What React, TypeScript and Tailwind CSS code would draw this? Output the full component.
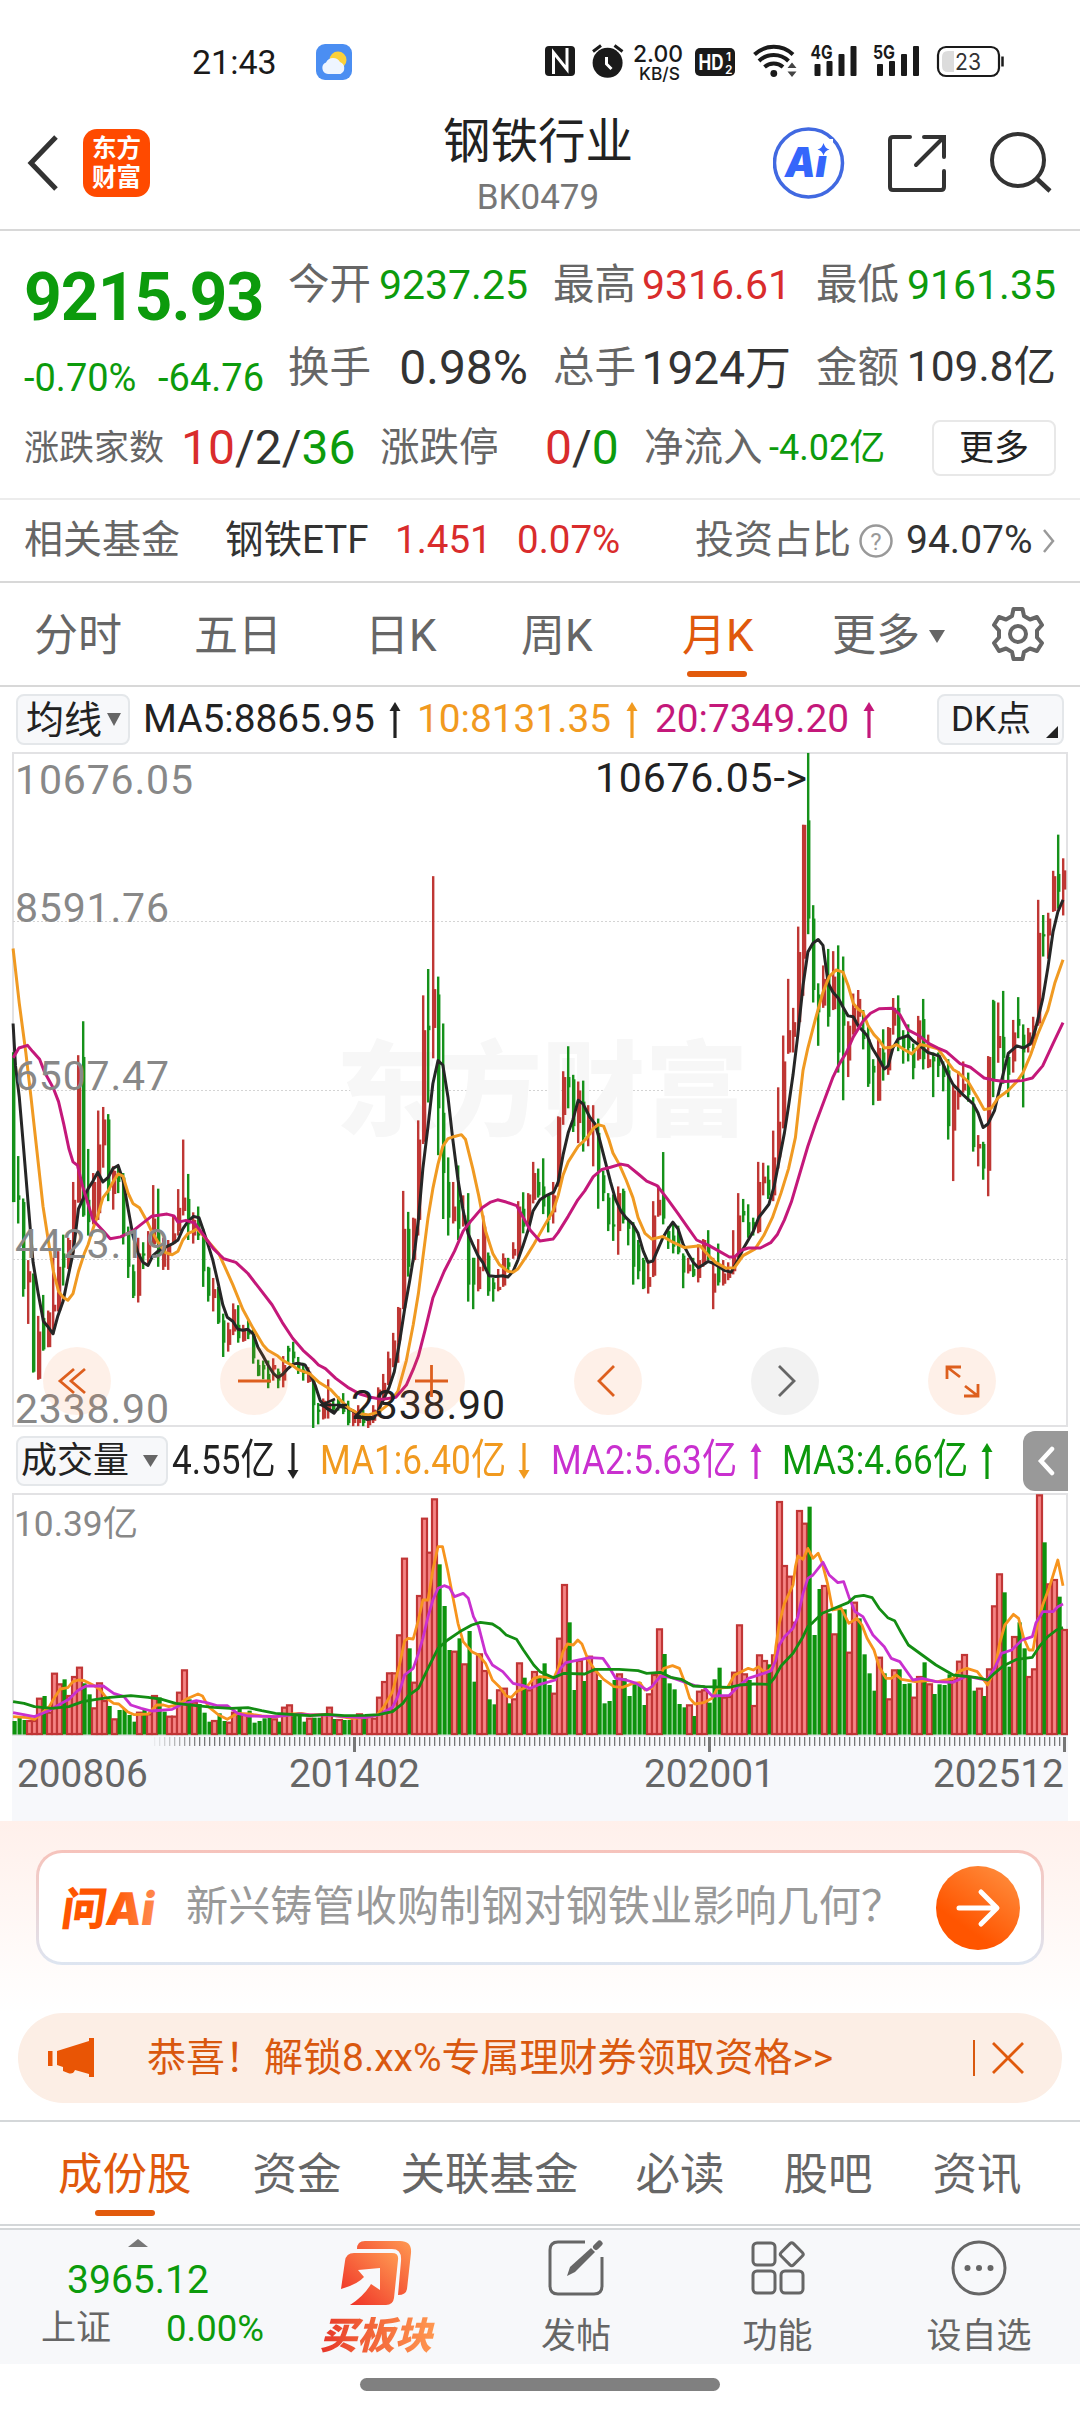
import { Fragment } from 'react'

// One entry per month: direction + high/bodyTop/bodyBottom/low, measured from the top of the plot
const CANDLES = `
g700/700/1035/1035 g932/1020/1030/1083 g1027/1035/1230/1247 r1165/1190/1215/1308 g1195/1203/1415/1417 r1290/1325/1431/1433
g1243/1295/1365/1368 r1278/1282/1360/1360 r1160/1265/1280/1330 r1145/1180/1278/1280 g1108/1150/1182/1222 r1115/1120/1180/1185
r990/1030/1110/1150 r706/730/1036/1036 g630/710/1065/1068 g916/1030/1080/1110 r970/990/1080/1085 r830/906/1060/1075
r822/850/908/958 g838/850/1010/1033 r955/965/1017/1052 g955/965/990/1015 g970/980/1110/1130 g1090/1105/1180/1205
g1175/1190/1245/1250 r1115/1150/1245/1260 g1125/1150/1155/1185 r1100/1130/1160/1175 r997/1072/1130/1135 g1005/1100/1155/1180
r1115/1140/1180/1187 r1120/1130/1155/1187 r1065/1105/1128/1130 r1006/1048/1100/1110 r895/1025/1055/1065 g972/1028/1085/1120
r1058/1075/1110/1128 g1045/1075/1110/1120 g1095/1110/1190/1225 g1180/1182/1245/1258 r1205/1230/1250/1280 g1225/1240/1305/1308
g1285/1300/1350/1382 r1305/1320/1355/1370 r1262/1275/1325/1333 g1266/1310/1340/1350 r1310/1318/1346/1348 g1300/1325/1332/1342
g1320/1330/1385/1397 g1388/1400/1424/1425 g1390/1400/1410/1432 g1390/1420/1440/1452 r1385/1400/1410/1435 g1408/1415/1435/1452
r1380/1400/1435/1450 g1357/1362/1370/1395 g1348/1370/1385/1395 g1382/1400/1410/1420 g1395/1410/1420/1435 r1405/1415/1438/1440
g1430/1435/1490/1541 g1485/1500/1505/1533 r1475/1480/1520/1522 r1432/1485/1500/1520 g1480/1490/1500/1505 g1470/1480/1495/1502
g1463/1490/1505/1510 g1480/1500/1530/1535 r1500/1505/1530/1537 r1490/1500/1530/1537 g1500/1510/1530/1537 r1510/1515/1535/1541
r1490/1500/1525/1530 r1450/1455/1510/1515 r1420/1440/1478/1480 r1370/1385/1440/1445 r1328/1345/1400/1405 r1270/1272/1345/1395
r1010/1095/1272/1275 g1057/1095/1180/1202 r1070/1072/1165/1170 r852/895/1075/1110 r572/650/900/905 g513/640/650/812
r305/558/645/713 g530/570/825/930 g635/835/970/1073 g935/990/1070/1110 r990/1045/1078/1083 g953/1030/1095/1120
r1020/1065/1085/1090 g1015/1075/1220/1258 g1160/1160/1220/1275 r1118/1180/1230/1235 r1065/1090/1185/1190 g1148/1155/1235/1245
g1205/1215/1230/1258 r1185/1225/1232/1235 r1150/1160/1222/1225 g1160/1170/1180/1188 r1125/1140/1155/1162 r1033/1045/1150/1160
g1013/1050/1090/1105 r1015/1018/1080/1085 r945/970/1030/1038 g960/990/1020/1025 g937/1000/1045/1062 g1018/1020/1075/1103
r990/1020/1058/1083 r843/845/1000/1000 r742/755/840/862 g686/755/778/825 g750/760/865/878 r765/785/858/903
g763/810/890/922 r818/850/885/910 r818/862/870/955 g848/880/965/1050 g965/975/1015/1033 g1015/1025/1085/1100
g1018/1085/1090/1122 r1000/1015/1100/1153 g1005/1010/1075/1083 g1075/1080/1095/1132 g1080/1090/1180/1220 g1120/1130/1190/1208
g1160/1165/1228/1230 r1165/1203/1225/1240 r1033/1065/1200/1203 r998/1030/1065/1068 g923/1020/1072/1085 g1090/1100/1125/1140
g1080/1110/1135/1150 g1088/1110/1148/1152 g1150/1155/1193/1228 r1160/1175/1190/1195 g1160/1185/1200/1203 r1130/1165/1205/1215
r1118/1120/1175/1180 g1098/1130/1160/1165 r1160/1195/1238/1275 g1128/1180/1215/1222 r1165/1195/1218/1222 r1170/1190/1205/1210
r1098/1155/1190/1197 r1015/1065/1155/1160 g1028/1055/1065/1080 g1040/1080/1108/1115 g1070/1080/1095/1110 r945/990/1102/1105
r947/978/993/1020 g953/985/1020/1028 r875/935/1020/1033 r778/855/935/960 r662/720/868/870 r535/650/700/703
r600/632/665/700 r418/475/632/650 r190/190/490/573 g29/180/400/435 g370/400/560/588 g545/570/610/685
r505/535/595/600 g468/530/620/642 r473/530/603/605 g460/520/700/745 g485/610/640/807 r630/640/718/755
r568/600/655/660 r560/580/620/640 g605/650/670/693 g640/670/770/777 g715/730/745/818 r670/690/808/808
g648/700/730/763 r643/645/740/750 r578/600/640/660 g572/600/670/697 g650/665/690/725 g637/665/690/720
g680/690/735/760 r618/628/715/718 g580/625/715/738 r660/715/733/735 g700/710/720/800 g700/715/730/755
g720/730/755/787 g715/740/865/895 r775/785/875/988 r742/790/800/828 r720/770/785/790 g745/770/795/810
g800/815/912/922 r885/905/915/955 g900/905/960/985 r708/710/965/1022 g582/585/760/800 r588/663/690/723
g562/665/712/770 g705/710/750/800 r627/655/720/745 g576/625/640/668 g637/660/700/823 r645/655/685/700
r620/640/670/690 r358/432/635/640 g392/435/440/485 r387/400/438/490 r293/305/383/385 g212/300/340/378
r265/292/335/393`
  .trim()
  .split(/\s+/)
  .map((s) => {
    const [high, top, bottom, low] = s.slice(1).split('/').map(Number)
    return { up: s[0] === 'r', high, top, bottom, low }
  })

const VOLUMES = `
g903 g893 g900 r900 r900 r833 g828 r875 r758 r790 g778 r825 r768 r740 g790 g823 r862 r787 r840 g858 r895 g870 g868 g885 g905
r875 g868 r880 r825 g832 g875 r887 r887 r815 r748 g838 r845 g852 g878 g905 r900 g880 g903 r905 r875 g865 r880 g872 g908 g903
g895 g893 r895 g905 r860 r853 g885 g878 g905 r893 g893 g893 r880 r860 g897 r897 g900 g900 r890 r880 g890 r888 r893 r830 r783
r757 r757 r643 r413 g685 r785 r525 r293 r395 r235 g433 g558 g690 r692 g655 r730 g633 g785 r700 r750 g838 g853 r808 r803 g850
r835 r727 g773 r808 r753 g770 g730 g795 r818 r653 r492 g607 g810 r720 g783 r707 r750 g780 g850 g843 g780 r760 g775 g828 g790
g787 g855 r820 r762 r625 g702 g790 g808 g852 g862 r853 g888 r812 r808 g848 g778 g743 r830 r828 r755 r613 r760 g780 r855 r703
r720 g733 r703 r243 r435 r467 r605 r270 r308 g260 g645 g507 r495 g580 r640 g560 g568 r695 r545 g595 g703 g760 g812 r710 g760
r835 r748 g748 g792 g790 r830 r768 g727 r790 g822 g793 g795 g763 r775 r722 r702 g770 g812 r803 g828 r745 r556 r460 g517 g740
r648 g607 g685 r768 r745 r223 g367 r490 r477 g530 r627`
  .trim()
  .split(/\s+/)
  .map((s) => ({ up: s[0] === 'r', top: Number(s.slice(1)) }))

const MA5 =
  '38,635 45,730 56,800 67,900 82,1040 96,1170 111,1240 126,1302 140,1315 154,1330 168,1290 183,1258 197,1205 212,1150 228,1050 243,1025 256,1005 270,988 284,968 299,990 314,980 328,960 343,953 357,985 372,1050 386,1110 401,1150 415,1170 430,1177 444,1155 459,1145 473,1140 488,1133 502,1128 517,1120 531,1095 546,1078 562,1067 578,1070 589,1095 604,1130 618,1165 633,1215 647,1265 660,1293 676,1302 691,1320 705,1322 720,1320 735,1330 749,1360 764,1380 778,1400 793,1418 807,1428 822,1420 836,1408 851,1398 865,1396 886,1400 900,1420 915,1445 930,1480 950,1498 970,1508 985,1493 1005,1495 1030,1505 1045,1515 1065,1522 1085,1520 1100,1500 1115,1475 1130,1450 1145,1415 1160,1350 1175,1275 1190,1210 1205,1140 1215,1075 1228,960 1243,865 1257,770 1272,718 1286,728 1301,800 1315,895 1330,985 1344,1050 1359,1105 1373,1130 1388,1155 1402,1170 1420,1200 1440,1202 1460,1200 1475,1203 1490,1190 1504,1165 1520,1130 1535,1095 1548,1055 1568,1030 1588,1020 1608,1013 1621,990 1635,930 1650,880 1664,850 1679,807 1693,815 1713,845 1728,860 1743,900 1758,945 1773,990 1788,1030 1803,1055 1818,1070 1838,1085 1853,1105 1868,1145 1882,1170 1896,1167 1911,1140 1925,1115 1940,1095 1954,1080 1969,1095 1984,1130 1998,1150 2013,1170 2028,1182 2043,1175 2056,1168 2071,1172 2088,1180 2103,1188 2123,1192 2143,1165 2158,1140 2173,1120 2188,1100 2203,1070 2218,1055 2233,1040 2248,1000 2263,940 2278,880 2290,820 2303,750 2317,660 2332,550 2346,475 2361,455 2376,447 2390,460 2405,545 2419,565 2434,578 2448,598 2463,618 2478,620 2492,640 2518,662 2533,690 2553,715 2568,737 2579,730 2593,690 2608,670 2637,662 2651,673 2668,683 2695,700 2728,708 2753,750 2768,772 2797,795 2826,815 2840,835 2855,868 2869,860 2888,830 2903,780 2928,702 2953,685 2973,690 2993,680 3008,645 3028,580 3043,510 3058,430 3072,385 3087,358'
const MA10 =
  '38,467 56,590 75,700 90,800 105,905 125,1045 140,1120 155,1190 170,1235 183,1248 197,1255 212,1240 228,1190 245,1150 256,1130 270,1095 284,1065 299,1025 314,1010 328,990 343,972 357,977 372,1015 386,1038 405,1048 425,1075 440,1100 459,1125 480,1148 500,1153 517,1145 531,1120 546,1105 562,1100 572,1095 590,1110 618,1135 635,1150 650,1175 676,1220 705,1275 735,1318 764,1355 778,1367 807,1380 822,1390 851,1402 865,1410 900,1420 925,1438 960,1455 990,1480 1015,1498 1040,1508 1070,1512 1100,1505 1125,1490 1155,1460 1180,1390 1200,1310 1215,1240 1228,1160 1243,1070 1257,1005 1272,950 1286,910 1301,893 1320,888 1340,884 1352,895 1373,960 1390,1020 1410,1100 1431,1150 1450,1175 1475,1190 1490,1192 1504,1185 1530,1155 1550,1130 1583,1085 1606,1055 1621,1020 1635,975 1650,945 1679,910 1703,893 1723,870 1737,862 1753,865 1768,895 1780,925 1798,950 1818,985 1838,1025 1853,1070 1873,1105 1893,1118 1925,1112 1954,1125 1988,1137 2033,1133 2058,1155 2078,1170 2108,1183 2133,1182 2158,1155 2193,1140 2218,1110 2243,1070 2268,1015 2290,960 2310,890 2323,800 2332,740 2346,690 2368,625 2390,565 2408,530 2428,515 2448,520 2463,550 2478,590 2492,603 2506,610 2521,640 2538,660 2553,672 2568,690 2588,688 2603,682 2623,692 2648,703 2673,682 2698,686 2724,692 2753,722 2768,738 2783,745 2811,765 2838,800 2858,828 2878,825 2898,802 2928,785 2953,765 2971,745 2993,705 3013,660 3043,605 3063,545 3087,492'
const MA20 =
  '38,712 55,690 80,684 95,698 115,715 130,745 155,780 170,810 185,860 200,915 212,945 225,953 240,1000 256,1040 270,1075 300,1100 320,1117 350,1113 385,1100 410,1085 440,1067 485,1062 505,1066 517,1080 540,1076 565,1082 590,1108 620,1140 650,1162 685,1170 720,1195 750,1225 790,1265 820,1305 850,1340 880,1367 910,1388 925,1400 945,1408 975,1430 1010,1450 1045,1465 1080,1473 1110,1477 1150,1472 1180,1445 1200,1410 1215,1380 1235,1320 1257,1250 1290,1190 1320,1145 1345,1100 1370,1075 1400,1048 1425,1035 1445,1030 1470,1035 1500,1043 1520,1070 1540,1098 1568,1122 1606,1118 1621,1103 1650,1067 1678,1030 1698,1010 1723,978 1748,962 1773,957 1803,950 1823,953 1858,975 1878,988 1908,998 1938,1028 1968,1060 1998,1093 2023,1120 2058,1132 2088,1145 2118,1158 2133,1158 2153,1143 2173,1138 2208,1138 2238,1126 2258,1107 2278,1075 2298,1035 2323,970 2346,910 2368,860 2390,815 2418,757 2438,725 2458,700 2478,665 2506,630 2528,612 2553,602 2593,601 2613,615 2638,650 2668,662 2698,680 2724,690 2748,698 2778,718 2788,725 2818,733 2838,745 2858,757 2888,762 2918,765 2968,763 2998,757 3028,730 3058,680 3087,633'

const VMA5 =
  '38,890 80,893 100,898 115,885 143,860 157,835 175,807 197,803 212,785 228,780 245,782 270,795 290,808 310,835 330,850 345,852 370,875 390,884 430,882 455,855 475,855 490,860 515,855 540,838 575,822 588,828 605,860 635,885 660,898 690,880 725,882 760,888 800,890 850,882 875,880 900,885 950,883 990,890 1020,895 1060,893 1095,885 1115,860 1140,815 1160,735 1175,663 1185,655 1200,657 1215,600 1228,540 1243,540 1257,450 1272,380 1285,380 1300,450 1315,530 1330,610 1345,665 1370,695 1390,705 1410,730 1430,780 1450,800 1470,828 1485,832 1500,815 1530,800 1550,775 1568,770 1588,772 1608,775 1621,745 1635,695 1648,672 1665,675 1678,660 1690,672 1708,720 1728,750 1753,778 1783,800 1808,802 1838,790 1858,788 1873,810 1893,805 1908,780 1928,745 1953,737 1973,745 1988,785 2003,835 2018,852 2043,848 2068,835 2083,805 2113,802 2133,765 2153,755 2173,745 2188,750 2203,740 2218,755 2233,752 2248,735 2253,680 2263,610 2278,550 2303,495 2310,440 2317,408 2332,418 2346,385 2361,415 2376,400 2388,430 2403,490 2418,570 2443,565 2465,610 2488,595 2503,615 2518,655 2538,690 2553,740 2573,775 2588,775 2603,765 2618,778 2658,785 2698,782 2723,785 2768,775 2783,755 2808,745 2838,755 2868,795 2888,750 2903,670 2918,615 2943,583 2958,595 2973,655 2988,690 3000,690 3013,610 3028,555 3048,500 3072,420 3087,497'
const VMA10 =
  '38,878 100,890 140,873 170,855 200,838 225,812 250,798 275,798 300,798 330,820 360,830 380,855 410,865 440,873 500,868 530,852 570,842 600,848 630,857 660,857 690,880 720,888 800,890 870,882 900,885 950,885 1000,890 1060,893 1100,885 1140,862 1155,830 1175,765 1200,745 1215,700 1228,655 1243,590 1257,540 1272,505 1290,497 1305,503 1320,530 1345,520 1360,535 1375,590 1390,620 1410,700 1430,735 1460,755 1490,790 1520,797 1540,805 1568,793 1613,780 1628,745 1643,728 1668,723 1713,713 1751,715 1768,740 1788,775 1818,780 1848,790 1878,810 1893,800 1918,768 1948,772 1978,783 2018,797 2043,800 2068,828 2118,826 2143,800 2173,775 2218,760 2240,752 2253,720 2263,675 2278,650 2303,625 2317,590 2332,520 2346,475 2361,465 2390,427 2408,465 2433,488 2450,485 2465,530 2483,575 2506,590 2535,645 2568,680 2588,715 2613,725 2651,780 2678,775 2718,785 2768,787 2808,768 2838,775 2868,780 2888,745 2908,700 2938,690 2968,660 2998,650 3008,610 3028,575 3058,575 3072,560 3087,552'
const VMA20 =
  '38,845 70,850 100,860 150,865 200,860 240,845 280,838 320,832 380,827 430,832 470,838 510,850 570,857 620,862 670,865 720,863 760,872 800,880 870,885 900,887 950,883 1000,887 1060,886 1100,884 1140,875 1170,850 1185,828 1215,805 1243,745 1272,685 1300,660 1340,632 1370,615 1395,607 1430,612 1450,625 1470,645 1500,658 1520,690 1550,735 1568,755 1608,773 1638,760 1698,762 1728,748 1798,748 1853,752 1878,760 1918,757 1948,772 1978,778 2013,798 2048,800 2118,802 2148,795 2188,792 2233,793 2248,775 2268,738 2303,700 2332,650 2346,620 2361,607 2388,580 2418,567 2463,548 2483,530 2508,526 2533,533 2553,565 2578,593 2598,602 2618,640 2638,675 2678,705 2718,735 2768,765 2838,773 2868,780 2888,760 2913,738 2953,718 2998,712 3018,680 3043,650 3068,630 3087,623'

const RED = '#bf3734'
const GREEN = '#15911a'

function StatusIcons() {
  return (
    <svg width="470" height="44" viewBox="0 0 470 44" fontFamily="Inter, Roboto, sans-serif" fill="#1a1a1a">
      {/* nfc */}
      <rect x="5" y="6" width="30" height="30" rx="4" />
      <path d="M13.5 34V12.500L27 29.500V8" fill="none" stroke="#fff" strokeWidth="3" />
      {/* alarm */}
      <circle cx="67.600" cy="22.800" r="15" />
      <path d="M53 11.500L61 5.500M82.500 11.500L74.500 5.500" stroke="#1a1a1a" strokeWidth="3" />
      <path d="M66.500 17V24L71.500 29" fill="none" stroke="#fff" strokeWidth="3" />
      <text x="93" y="22" fontSize="23.500" fontWeight="500" textLength="50" lengthAdjust="spacingAndGlyphs">2.00</text>
      <text x="99" y="39.500" fontSize="17.500" fontWeight="500" textLength="41" lengthAdjust="spacingAndGlyphs">KB/S</text>
      {/* hd */}
      <rect x="155" y="8" width="40" height="28" rx="5" />
      <text x="158.500" y="30" fontSize="21" fontWeight="700" fill="#fff" textLength="25" lengthAdjust="spacingAndGlyphs">HD</text>
      <text x="186" y="21" fontSize="12" fontWeight="600" fill="#fff">1</text>
      <text x="185" y="33.500" fontSize="12" fontWeight="600" fill="#fff">2</text>
      {/* wifi */}
      <g fill="none" stroke="#1a1a1a" strokeWidth="4">
        <path d="M214.500 14.500A28 28 0 0 1 253 14.500" />
        <path d="M219 21A21 21 0 0 1 248.500 21" />
        <path d="M224.500 27A14 14 0 0 1 243 27" />
      </g>
      <circle cx="233.800" cy="33.500" r="3.400" />
      <path d="M247.500 28L252 22.500L256.500 28ZM247.500 31.500L252 37L256.500 31.500Z" fill="#444" />
      {[
        [0, '4G'],
        [62.5, '5G'],
      ].map(([x, name]) => (
        <g key={name} transform={`translate(${x} 0)`}>
          <text x="270.500" y="18.500" fontSize="19" fontWeight="700" textLength="22" lengthAdjust="spacingAndGlyphs">{name}</text>
          <rect x="274.500" y="24" width="6" height="12" rx="1" />
          <rect x="286.500" y="21" width="6" height="15" rx="1" />
          <rect x="298.500" y="14" width="6" height="22" rx="1" />
          <rect x="310.500" y="6" width="6" height="30" rx="1" />
        </g>
      ))}
      {/* battery */}
      <rect x="398" y="7" width="61" height="29" rx="8" fill="none" stroke="#1a1a1a" strokeWidth="2.200" />
      <path d="M408 11H414V32H408Q402 32 402 26V17Q402 11 408 11Z" fill="#dcdcdc" />
      <path d="M462.500 16.500V26.500" stroke="#1a1a1a" strokeWidth="2.500" />
      <text x="415" y="30" fontSize="23" fill="#333" textLength="26" lengthAdjust="spacingAndGlyphs">23</text>
    </svg>
  )
}

function Header() {
  return (
    <>
      <div className="flex h-[96px] items-center pt-7">
        <span className="ml-[192px] w-[124px] text-[34px] leading-none text-[#1a1a1a]">21:43</span>
        <svg width="36" height="36" viewBox="0 0 36 36">
          <rect width="36" height="36" rx="9" fill="#4b8ef2" />
          <circle cx="22" cy="16" r="8.500" fill="#fcd13a" />
          <path d="M12 30a6 6 0 0 1-2-11.500a8 8 0 0 1 14 -0.500a6.500 6.500 0 0 1 0.500 12Z" fill="#eef5ff" />
        </svg>
        <div className="ml-[188px]">
          <StatusIcons />
        </div>
      </div>
      <header className="flex h-[135px] items-center border-b-2 border-[#d8d8d8]">
        <svg className="ml-[26px]" width="34" height="60" viewBox="0 0 34 60" fill="none" stroke="#333" strokeWidth="5">
          <path d="M30 4L5 30L30 56" />
        </svg>
        <div className="ml-[23px] flex h-[68px] w-[67px] flex-col items-center justify-center rounded-[14px] bg-[#ff4a00] text-[24.500px] font-bold leading-[29px] text-white">
          <span>东方</span>
          <span>财富</span>
        </div>
        <div className="ml-[238px] w-[300px] pt-[14px] text-center">
          <h1 className="text-[47.500px] leading-[56px] text-[#222]">钢铁行业</h1>
          <p className="text-[35px] leading-[56px] text-[#777]">BK0479</p>
        </div>
        <svg className="ml-[85px]" width="72" height="72" viewBox="0 0 72 72">
          <circle cx="35.500" cy="36" r="34" fill="none" stroke="#4169e1" strokeWidth="3.500" />
          <text x="12" y="50" fontSize="41" fontWeight="900" fontStyle="italic" fontFamily="Inter, sans-serif" fill="#3566fb" textLength="42" lengthAdjust="spacingAndGlyphs">Ai</text>
          <path d="M42 12H60V29H42Z" fill="#fff" />
          <path d="M50.500 16Q52 21.500 56.500 22.500Q52 23.500 50.500 28.500Q49 23.500 44.500 22.500Q49 21.500 50.500 16Z" fill="#3566fb" />
        </svg>
        <svg className="ml-[42px]" width="60" height="60" viewBox="0 0 60 60" fill="none" stroke="#333" strokeWidth="4" strokeLinecap="round">
          <path d="M23 4H6Q3 4 3 7V54Q3 57 6 57H54Q57 57 57 54V38M37 4H57V24M56 5L29 32" />
        </svg>
        <svg className="ml-[43px]" width="64" height="64" viewBox="0 0 64 64" fill="none" stroke="#333" strokeWidth="4">
          <circle cx="28" cy="29" r="26" />
          <path d="M46 47L60 60" strokeWidth="4.500" />
        </svg>
      </header>
    </>
  )
}

function Stat({ label, value, className }: { label: string; value: string; className: string }) {
  return (
    <div className="flex h-[60px] items-center justify-between whitespace-nowrap leading-none">
      <span className="text-[41.500px] text-[#666]">{label}</span>
      <span className={className}>{value}</span>
    </div>
  )
}

function Quote() {
  return (
    <section className="h-[269px] border-b-2 border-[#ececec] pt-[24px]">
      <div className="flex pl-[24px]">
        <div className="w-[240px] whitespace-nowrap text-[#0c9b0c]">
          <div className="mt-[3px] text-[66px] font-bold leading-[80px] tracking-[-1px]">9215.93</div>
          <div className="mt-[18px] flex justify-between text-[38px] leading-[44px]">
            <span>-0.70%</span>
            <span>-64.76</span>
          </div>
        </div>
        <div className="ml-[24px] grid grid-cols-[240px_238px_240px] gap-x-[25px] gap-y-[20px]">
          <Stat label="今开" value="9237.25" className="text-[41px] text-[#0c9b0c]" />
          <Stat label="最高" value="9316.61" className="text-[41px] text-[#d92c2c]" />
          <Stat label="最低" value="9161.35" className="text-[41px] text-[#0c9b0c]" />
          <Stat label="换手" value="0.98%" className="text-[48px] text-[#333]" />
          <Stat label="总手" value="1924万" className="text-[46px] text-[#333]" />
          <Stat label="金额" value="109.8亿" className="text-[42.500px] text-[#333]" />
        </div>
      </div>
      <div className="mt-[12px] flex h-[72px] items-center whitespace-nowrap pl-[24px] leading-none text-[#666]">
        <span className="w-[157px] text-[35px]">涨跌家数</span>
        <span className="w-[199px] text-[48px] text-[#333]">
          <span className="text-[#d92c2c]">10</span>/2/<span className="text-[#0c9b0c]">36</span>
        </span>
        <span className="w-[165px] text-[39.500px]">涨跌停</span>
        <span className="w-[99px] text-[48px] text-[#333]">
          <span className="text-[#d92c2c]">0</span>/<span className="text-[#0c9b0c]">0</span>
        </span>
        <span className="w-[125px] text-[39.500px]">净流入</span>
        <span className="w-[163px] text-[36px] text-[#0c9b0c]">-4.02亿</span>
        <button className="h-[56px] w-[124px] rounded-lg border-2 border-[#e8e8e8] text-[35px] text-[#222]">更多</button>
      </div>
    </section>
  )
}

function FundRow() {
  return (
    <section className="flex h-[83px] items-center whitespace-nowrap border-b-2 border-[#d8d8d8] pl-[24px] text-[38px] leading-none">
      <span className="w-[201px] text-[39px] text-[#666]">相关基金</span>
      <span className="w-[170px] text-[38.500px] text-[#333]">钢铁ETF</span>
      <span className="w-[122px] text-[38.500px] text-[#d92c2c]">1.451</span>
      <span className="w-[178px] text-[38.500px] text-[#d92c2c]">0.07%</span>
      <span className="text-[39px] text-[#666]">投资占比</span>
      <svg className="ml-[7px]" width="36" height="36" viewBox="0 0 36 36">
        <circle cx="18" cy="18" r="15.500" fill="none" stroke="#999" strokeWidth="2.500" />
        <text x="18" y="26.500" fontSize="24" textAnchor="middle" fontFamily="Roboto, sans-serif" fill="#999">?</text>
      </svg>
      <span className="ml-[12px] w-[136px] text-[39px] text-[#333]">94.07%</span>
      <svg width="14" height="26" viewBox="0 0 14 26" fill="none" stroke="#999" strokeWidth="2.500">
        <path d="M2 2L11 13L2 24" />
      </svg>
    </section>
  )
}

function PeriodTabs() {
  return (
    <nav className="flex h-[104px] items-center whitespace-nowrap border-b-2 border-[#d8d8d8] pl-[34px] pt-[4px] text-[44px] leading-none text-[#666]">
      <span className="w-[160px]">分时</span>
      <span className="w-[171px]">五日</span>
      <span className="w-[156px]">日K</span>
      <span className="w-[161px]">周K</span>
      <span className="relative w-[150px] text-[#e0590c]">
        月K
        <span className="absolute left-[5px] top-[57px] h-[6px] w-[60px] rounded-[3px] bg-[#e25a0c]" />
      </span>
      <span>更多</span>
      <svg className="ml-[9px]" width="16" height="13" viewBox="0 0 16 13" fill="#666">
        <path d="M0 0H16L8 13Z" />
      </svg>
      <svg className="-mt-[4px] ml-[44px]" width="58" height="58" viewBox="0 0 58 58" fill="none" stroke="#666" strokeWidth="4" strokeLinejoin="round">
        <path d="M24.500 4H33.500L35 11L41 14.500L48 12L53 20L48 25.500V32.500L53 38L48 46L41 43.500L35 47L33.500 54H24.500L23 47L17 43.500L10 46L5 38L10 32.500V25.500L5 20L10 12L17 14.500L23 11Z" />
        <circle cx="29" cy="29" r="8" />
      </svg>
    </nav>
  )
}

function Arrow({ down, color, className }: { down?: boolean; color: string; className?: string }) {
  return (
    <svg className={className} width="12" height="36" viewBox="0 0 12 36">
      <g transform={down ? 'rotate(180 6 18)' : undefined}>
        <path d="M6 4V36" stroke={color} strokeWidth="3.200" />
        <path d="M0.500 9L6 0L11.500 9Z" fill={color} />
      </g>
    </svg>
  )
}

function MaBar() {
  return (
    <div className="flex h-[65px] items-center whitespace-nowrap pl-[16px] text-[38.800px] leading-none">
      <div className="flex h-[51px] w-[114px] items-center rounded-lg border-2 border-[#e4e7ea] bg-[#f7f8fa] pl-[8px] text-[38px] text-[#222]">
        均线
        <svg className="ml-[5px]" width="14" height="13" viewBox="0 0 14 13" fill="#666">
          <path d="M0 0H14L7 13Z" />
        </svg>
      </div>
      <span className="ml-[13px] w-[246px] text-[#222]">MA5:8865.95</span>
      <Arrow color="#222" />
      <span className="ml-[16px] w-[209px] text-[#f19a1f]">10:8131.35</span>
      <Arrow color="#f19a1f" />
      <span className="ml-[17px] w-[208px] text-[#c4187a]">20:7349.20</span>
      <Arrow color="#c4187a" />
      <div className="relative ml-[62px] h-[51px] w-[127px] rounded-lg border-2 border-[#e4e7ea] bg-[#f7f8fa] pl-[12px] text-[35px] leading-[47px] text-[#222]">
        DK点
        <svg className="absolute bottom-[5px] right-[4px]" width="12" height="12" viewBox="0 0 12 12" fill="#222">
          <path d="M12 0V12H0Z" />
        </svg>
      </div>
    </div>
  )
}

const CONTROLS = [
  { d: 'M31 22L17 34L31 46M42 22L28 34L42 46', color: '#dd5f1e' },
  { d: 'M18 34H51', color: '#dd5f1e' },
  { d: 'M18 34H51M34.500 18V50', color: '#dd5f1e' },
  { d: 'M40 19L25 34L40 49', color: '#dd5f1e' },
  { d: 'M28 19L43 34L28 49', color: '#666' },
  { d: 'M19 32V20H33M19 20L32 30M50 37V49H36M50 49L37 39', color: '#dd5f1e' },
]

function PriceChart() {
  return (
    <div className="relative mx-[12px] h-[676px]">
      <svg className="overflow-visible" width="1056" height="676" viewBox="0 0 1056 676">
        <rect x="1" y="1" width="1054" height="673" fill="#fff" stroke="#e2e2e4" strokeWidth="2" />
        {[169.5, 338.5, 507.5].map((y) => (
          <path key={y} d={`M1 ${y}H1055`} stroke="#d4d4d4" strokeWidth="1" strokeDasharray="2 2" />
        ))}
        <text x="324" y="376" fontSize="103" fontWeight="900" fontFamily="'Noto Sans CJK SC', sans-serif" fill="#f7f7f7">东方财富</text>
        <g transform="translate(-12 -12) scale(0.34435 0.44643)">
          {CANDLES.map((c, i) => {
            const x = 38.300 + i * 14.520
            return (
              <g key={i} fill={c.up ? RED : GREEN}>
                <rect x={x - 3.5} y={c.high} width="7" height={c.low - c.high} />
                <rect x={x - 3.5} y={c.top} width={c.up ? 12.5 : 10} height={c.bottom - c.top} />
              </g>
            )
          })}
          <g fill="none" strokeWidth="3" strokeLinejoin="round">
            <polyline points={MA5} stroke="#262626" vectorEffect="non-scaling-stroke" />
            <polyline points={MA10} stroke="#f09a22" vectorEffect="non-scaling-stroke" />
            <polyline points={MA20} stroke="#c4187a" vectorEffect="non-scaling-stroke" />
          </g>
        </g>
        <g fontFamily="Roboto, sans-serif" fontSize="41" fill="#888">
          <text x="3" y="42" textLength="178">10676.05</text>
          <text x="3" y="170" textLength="154">8591.76</text>
          <text x="3" y="338" textLength="154">6507.47</text>
          <text x="3" y="506" textLength="154">4423.19</text>
          <text x="3" y="671" textLength="154">2338.90</text>
          <text x="583" y="40" fill="#222" textLength="212">{'10676.05->'}</text>
          <text x="339" y="667" fill="#222" textLength="154">2338.90</text>
        </g>
        <path d="M323 647L309 653L323 660M309 653H335" fill="none" stroke="#222" strokeWidth="2.500" />
      </svg>
      <div className="absolute bottom-[13px] left-[31px] flex gap-[109px]">
        {CONTROLS.map((c, i) => (
          <button key={i} className={`h-[68px] w-[68px] rounded-full ${i === 4 ? 'bg-[#808080]/10' : 'bg-[#f97a30]/[0.11]'}`}>
            <svg width="68" height="68" viewBox="0 0 68 68" fill="none" stroke={c.color} strokeWidth="2.800">
              <path d={c.d} />
            </svg>
          </button>
        ))}
      </div>
    </div>
  )
}

function VolumeBar() {
  return (
    <div className="flex h-[65px] items-center whitespace-nowrap pl-[16px] leading-none">
      <div className="flex h-[50px] w-[152px] items-center rounded-lg border-2 border-[#e4e7ea] bg-[#f7f8fa] pl-[3px] text-[36px] text-[#222]">
        成交量
        <svg className="ml-[14px]" width="15" height="12" viewBox="0 0 15 12" fill="#666">
          <path d="M0 0H15L7.500 12Z" />
        </svg>
      </div>
      <div className="flex items-center text-[35.200px]">
        <span className="ml-[4px] w-[115px] scale-y-[1.18] text-[#222]">4.55亿</span>
        <Arrow down color="#222" />
        <span className="ml-[21px] w-[198px] scale-y-[1.18] text-[#f19a1f]">MA1:6.40亿</span>
        <Arrow down color="#f19a1f" />
        <span className="ml-[21px] w-[199px] scale-y-[1.18] text-[#c930cf]">MA2:5.63亿</span>
        <Arrow color="#c930cf" />
        <span className="ml-[20px] w-[199px] scale-y-[1.18] text-[#0c980c]">MA3:4.66亿</span>
        <Arrow color="#0c980c" />
      </div>
      <div className="ml-[30px] flex h-[60px] w-[45px] items-center justify-center rounded-l-[12px] bg-[#999]">
        <svg width="18" height="30" viewBox="0 0 18 30" fill="none" stroke="#fff" strokeWidth="4.500" strokeLinecap="round">
          <path d="M15 3L4 15L15 27" />
        </svg>
      </div>
    </div>
  )
}

function VolumeChart() {
  return (
    <div className="mx-[12px] h-[328px] bg-[#f7f8fb]">
      <svg className="block" width="1056" height="262" viewBox="0 0 1056 262">
        <rect x="1" y="1" width="1054" height="241" fill="#fff" stroke="#e2e2e4" strokeWidth="2" />
        <g transform="translate(0 -73)">
          {VOLUMES.map((v, i) => {
            const x = 2.500 + i * 5
            const y = v.top / 3
            return v.up ? (
              <rect key={i} x={x - 2.500} y={y + 1} width="5" height={313 - y} fill="#f58585" stroke="#c13636" strokeWidth="2.200" />
            ) : (
              <rect key={i} x={x - 2} y={y} width="4.200" height={314.500 - y} fill="#0d930d" />
            )
          })}
        </g>
        <g transform="translate(-12 -73) scale(0.34435 0.33333)" fill="none" strokeWidth="2.800" strokeLinejoin="round">
          <polyline points={VMA5} stroke="#f7941d" vectorEffect="non-scaling-stroke" />
          <polyline points={VMA10} stroke="#c930cf" vectorEffect="non-scaling-stroke" />
          <polyline points={VMA20} stroke="#138d13" vectorEffect="non-scaling-stroke" />
        </g>
        {VOLUMES.map((_, i) => {
          if (i < 28) return null
          const major = i === 68 || i === 139 || i === 210
          return (
            <rect
              key={i}
              x={2.500 + i * 5 - (major ? 1.5 : 0.5)}
              y="244"
              width={major ? 3 : 1.3}
              height={major ? 15 : 9}
              fill="#777"
              opacity={Math.min(1, (i - 27) / 10)}
            />
          )
        })}
        <text x="2" y="43" fontSize="35.300" fontFamily="Roboto, 'Noto Sans CJK SC', sans-serif" fill="#888">10.39亿</text>
      </svg>
      <div className="flex whitespace-nowrap pl-[5px] text-[38.800px] leading-[38px] text-[#666]">
        <span className="w-[272px]">200806</span>
        <span className="w-[355px]">201402</span>
        <span className="w-[289px]">202001</span>
        <span>202512</span>
      </div>
    </div>
  )
}

function AskAi() {
  return (
    <section className="h-[192px] bg-linear-to-b from-[#fff0eb] to-white px-[36px] pt-[29px]">
      <div className="h-[115px] rounded-[26px] bg-linear-to-b from-[#f6c3bb] to-[#dde5f1] p-[3px]">
        <div className="flex h-full items-center rounded-[23px] bg-white pl-[20px]">
          <svg className="overflow-visible" width="102" height="50" viewBox="0 0 102 50">
            <defs>
              <linearGradient id="ask" x1="0" x2="1">
                <stop offset="0.500" stopColor="#ff5500" />
                <stop offset="1" stopColor="#ff8a50" />
              </linearGradient>
            </defs>
            <g fill="url(#ask)" fontWeight="900" fontFamily="Inter, 'Noto Sans CJK SC', sans-serif">
              <text transform="translate(1 42) skewX(-8)" fontSize="45" textLength="93" lengthAdjust="spacingAndGlyphs">问Ai</text>
            </g>
          </svg>
          <span className="ml-[25px] w-[750px] whitespace-nowrap text-[42.200px] leading-none text-[#999]">新兴铸管收购制钢对钢铁业影响几何？</span>
          <svg width="84" height="84" viewBox="0 0 84 84">
            <defs>
              <linearGradient id="go" x1="0.800" y1="0" x2="0.300" y2="0.700">
                <stop offset="0" stopColor="#ff8c3c" />
                <stop offset="1" stopColor="#ff5500" />
              </linearGradient>
            </defs>
            <circle cx="42" cy="42" r="42" fill="url(#go)" />
            <path d="M23 42H60M45 26L61 42L45 58" fill="none" stroke="#fff" strokeWidth="5" strokeLinecap="round" strokeLinejoin="round" />
          </svg>
        </div>
      </div>
    </section>
  )
}

function Promo() {
  return (
    <section className="h-[109px] border-b-2 border-[#d4d7d9] px-[18px]">
      <div className="flex h-[90px] items-center rounded-full bg-[#fceee5] pl-[30px] text-[#d9580f]">
        <svg width="46" height="40" viewBox="0 0 46 40" fill="#e95505">
          <path d="M0 13H4.500V28H0ZM9 13L41 3V0H46V39H41V36L27 32Q25 37 20 35L15 33V29L9 27Z" />
        </svg>
        <span className="ml-[53px] w-[826px] whitespace-nowrap text-[39px] leading-none">恭喜！解锁8.xx%专属理财券领取资格&gt;&gt;</span>
        <span className="h-[36px] w-[1.500px] bg-[#d9580f]" />
        <svg className="ml-[16px]" width="34" height="34" viewBox="0 0 34 34" fill="none" stroke="#e0590c" strokeWidth="2.800">
          <path d="M2 2L32 32M32 2L2 32" />
        </svg>
      </div>
    </section>
  )
}

function BottomTabs() {
  return (
    <nav className="flex h-[104px] items-center gap-[61px] whitespace-nowrap border-b-2 border-[#d4d7d9] pl-[58px] pt-[4px] text-[44.500px] leading-none text-[#666]">
      <span className="relative text-[#e0590c]">
        成份股
        <span className="absolute left-[37px] top-[57px] h-[6px] w-[60px] rounded-[3px] bg-[#e25a0c]" />
      </span>
      <span>资金</span>
      <span className="-ml-[2px]">关联基金</span>
      <span className="-ml-[4px]">必读</span>
      <span className="-ml-[2px]">股吧</span>
      <span className="-ml-[1px]">资讯</span>
    </nav>
  )
}

function BottomBar() {
  return (
    <footer className="mt-[2px] flex h-[136px] border-t-2 border-[#d4d7d9] bg-[#f7f8fa] text-[35px] leading-none text-[#666]">
      <div className="w-[276px] whitespace-nowrap pt-[9px]">
        <svg className="mx-auto block" width="20" height="8" viewBox="0 0 20 8" fill="#777">
          <path d="M0 8L10 0L20 8Z" />
        </svg>
        <div className="mt-[12px] text-center text-[39px] leading-[42px] text-[#0c9b0c]">3965.12</div>
        <div className="mt-[8px] flex items-center pl-[41px] leading-[40px]">
          <span className="w-[125px]">上证</span>
          <span className="text-[36.500px] text-[#0c9b0c]">0.00%</span>
        </div>
      </div>
      <div className="flex w-[200px] flex-col items-center pt-[10px]">
        <svg width="72" height="66" viewBox="0 0 72 66">
          <defs>
            <linearGradient id="buy" x1="0" y1="1" x2="1" y2="0">
              <stop offset="0" stopColor="#ee2a24" />
              <stop offset="1" stopColor="#ff9a52" />
            </linearGradient>
          </defs>
          <path d="M17 9Q17 1 25 1H60Q72 1 71 13L67 49Q66 55 58 55L61 21Q62 9 52 9Z" fill="url(#buy)" />
          <path d="M5 21Q6 13 14 13H52Q59 13 58 20L54 58Q53 65 46 65H10Q24 56 31 44L40 50V28L18 30L24 37Q18 44 1 49Z" fill="url(#buy)" />
        </svg>
        <span className="mt-[7px] whitespace-nowrap bg-linear-to-r from-[#e52d27] to-[#ff9850] bg-clip-text px-1 font-['Noto_Sans_CJK_SC'] text-[37.500px] font-black italic leading-[40px] text-transparent">
          买板块
        </span>
      </div>
      {[
        {
          name: '发帖',
          width: 'w-[200px]',
          icon: (
            <>
              <path d="M37 2H10Q2 2 2 10V46Q2 54 10 54H46Q54 54 54 46V17" />
              <path d="M19 36L22 27L43 8L47 12L27 32Z" fill="#666" stroke="none" />
              <path d="M48 7L51.500 3.500" strokeWidth="6" strokeLinecap="round" />
            </>
          ),
        },
        {
          name: '功能',
          width: 'w-[203px]',
          icon: (
            <>
              <rect x="3" y="3" width="22" height="22" rx="4" />
              <rect x="3" y="31" width="22" height="22" rx="4" />
              <rect x="31" y="31" width="22" height="22" rx="4" />
              <rect x="33" y="5.500" width="17.500" height="17.500" rx="2.500" transform="rotate(45 41.750 14.250)" />
            </>
          ),
        },
        {
          name: '设自选',
          width: 'w-[200px]',
          icon: (
            <>
              <circle cx="28" cy="28" r="26" />
              <g fill="#666" stroke="none">
                <circle cx="16.500" cy="28" r="3" />
                <circle cx="28" cy="28" r="3" />
                <circle cx="39.500" cy="28" r="3" />
              </g>
            </>
          ),
        },
      ].map((item) => (
        <Fragment key={item.name}>
          <div className={`flex flex-col items-center pt-[10px] ${item.width}`}>
            <svg width="56" height="56" viewBox="0 0 56 56" fill="none" stroke="#666" strokeWidth="3">
              {item.icon}
            </svg>
            <span className="mt-[23px]">{item.name}</span>
          </div>
        </Fragment>
      ))}
    </footer>
  )
}

export default function App() {
  return (
    <div className="h-[2412px] w-[1080px] overflow-hidden bg-white font-[Roboto,'Noto_Sans_CJK_SC',sans-serif]">
      <Header />
      <Quote />
      <FundRow />
      <PeriodTabs />
      <MaBar />
      <PriceChart />
      <VolumeBar />
      <VolumeChart />
      <AskAi />
      <Promo />
      <BottomTabs />
      <BottomBar />
      <div className="mx-auto mt-[14px] h-[13px] w-[360px] rounded-full bg-[#808080]" />
    </div>
  )
}
